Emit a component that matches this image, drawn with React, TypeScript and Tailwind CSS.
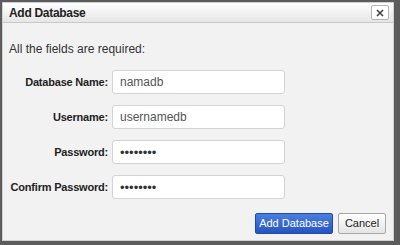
const fields = [
  { label: "Database Name:", value: "namadb", type: "text" },
  { label: "Username:", value: "usernamedb", type: "text" },
  { label: "Password:", value: "secret12", type: "password" },
  { label: "Confirm Password:", value: "secret12", type: "password" },
];

const App = () => {
  return (
    <div className="w-[400px] h-[245px] bg-[#5c5c5c] flex" style={{ fontFamily: '"Liberation Sans", Arial, sans-serif' }}>
      <div className="mt-[2px] ml-[2px] w-[392px] h-[239px] bg-[#f2f2f2] border border-[#d0d0d0] flex flex-col">
        {/* title bar */}
        <div className="h-[20px] shrink-0 flex items-center justify-between pl-[6px] pr-[4px] bg-gradient-to-b from-white to-[#e6e6e6] border-b border-[#c8c8c8]">
          <span className="text-[12px] font-bold text-[#222] tracking-[-0.3px]">Add Database</span>
          <button className="w-[18px] h-[15px] flex items-center justify-center bg-white border border-[#b5b5b5] rounded-[2px] text-[#444]">
            <svg width="8" height="8" viewBox="0 0 8 8">
              <path d="M1 1L7 7M7 1L1 7" stroke="#444" strokeWidth="1.6" />
            </svg>
          </button>
        </div>

        {/* body */}
        <div className="flex-1 flex flex-col pl-[6px] pt-[19px]">
          <p className="text-[12px] text-[#333] leading-[14px]">All the fields are required:</p>
          <div className="mt-[14px] flex flex-col gap-[11px]">
            {fields.map((f) => (
              <div key={f.label} className="flex items-center">
                <div className="w-[99px] flex justify-end">
                  <label className="whitespace-nowrap text-[11px] font-bold text-[#222] tracking-[-0.2px]">
                    {f.label}
                  </label>
                </div>
                <input
                  readOnly
                  type={f.type}
                  value={f.value}
                  className={
                    f.type === "password"
                      ? "ml-[4px] w-[173px] h-[24px] bg-white border border-[#d4d4d4] rounded-[3px] px-[7px] text-[13px] text-[#333] outline-none"
                      : "ml-[4px] w-[173px] h-[24px] bg-white border border-[#d4d4d4] rounded-[3px] px-[7px] text-[12px] text-[#555] outline-none"
                  }
                />
              </div>
            ))}
          </div>
          <div className="mt-auto mb-[6px] mr-[7px] flex justify-end gap-[5px]">
            <button className="w-[78px] h-[21px] rounded-[2px] border border-[#1e4aa8] bg-gradient-to-b from-[#4a7fe0] to-[#2754c0] text-white text-[11px]">
              Add Database
            </button>
            <button className="w-[48px] h-[21px] rounded-[2px] border border-[#a8a8a8] bg-gradient-to-b from-white to-[#e4e4e4] text-[#222] text-[11px]">
              Cancel
            </button>
          </div>
        </div>
      </div>
    </div>
  );
};

export default App;
